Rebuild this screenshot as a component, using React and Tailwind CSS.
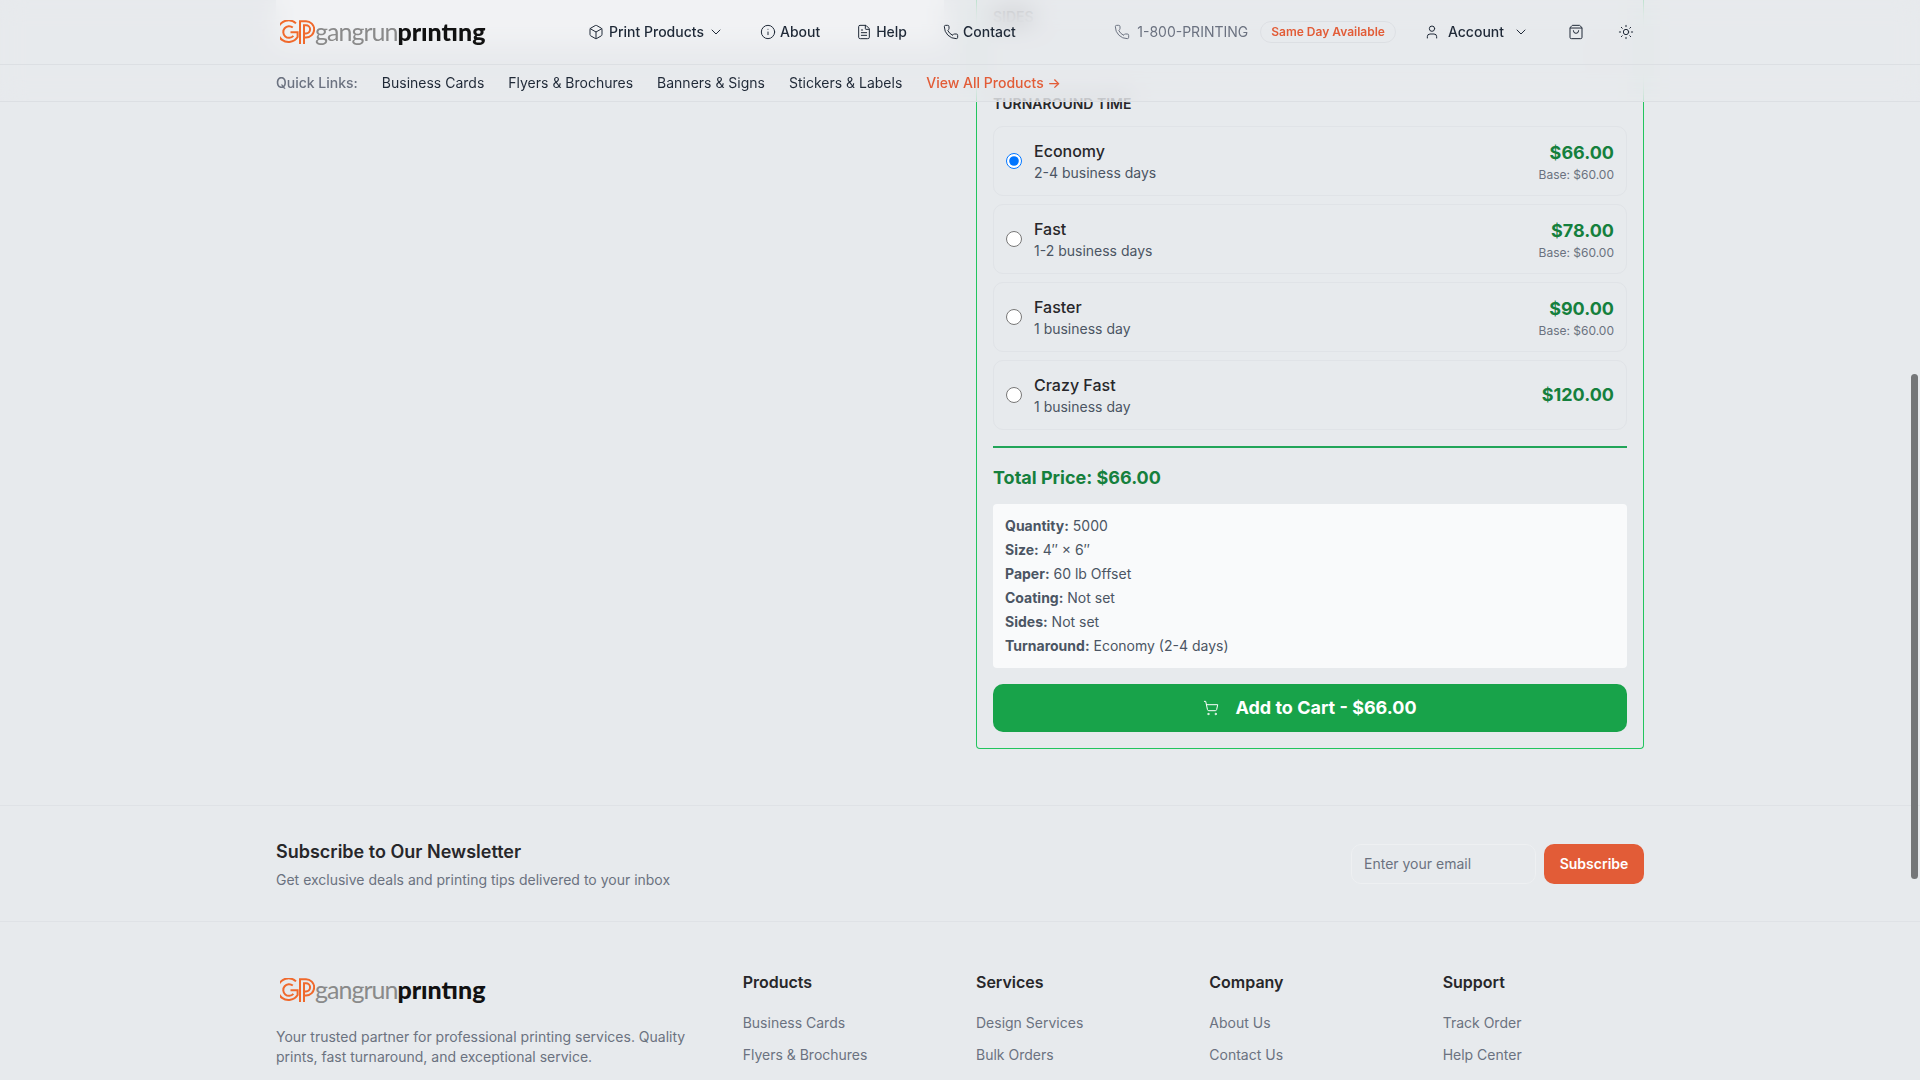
import { Box, Info, FileText, Phone, ChevronDown, User, ShoppingBag, Sun, ShoppingCart } from "lucide-react";

const quickLinks = ["Business Cards", "Flyers & Brochures", "Banners & Signs", "Stickers & Labels"];

const turnarounds = [
  { name: "Economy", time: "2-4 business days", price: "$66.00", base: true, checked: true },
  { name: "Fast", time: "1-2 business days", price: "$78.00", base: true },
  { name: "Faster", time: "1 business day", price: "$90.00", base: true },
  { name: "Crazy Fast", time: "1 business day", price: "$120.00" },
];

const summary = [
  ["Quantity:", "5000"],
  ["Size:", "4″ × 6″"],
  ["Paper:", "60 lb Offset"],
  ["Coating:", "Not set"],
  ["Sides:", "Not set"],
  ["Turnaround:", "Economy (2-4 days)"],
];

const footerCols = [
  { title: "Products", links: ["Business Cards", "Flyers & Brochures"] },
  { title: "Services", links: ["Design Services", "Bulk Orders"] },
  { title: "Company", links: ["About Us", "Contact Us"] },
  { title: "Support", links: ["Track Order", "Help Center"] },
];

function Logo() {
  return (
    <div className="flex h-10 items-center pl-[4px] select-none">
      <svg width="35" height="25" viewBox="0 0 35 25" fill="none" stroke="#f0692c" strokeWidth="2" className="shrink-0">
        <path d="M16 3.4 A10.8 10.8 0 1 0 17.6 17 V12.2 H10.5" />
        <path d="M12.8 7.6 A5.8 5.8 0 1 0 13.4 15.9" />
        <path d="M20 24 V1.2 H26 A8 8 0 0 1 26 17.5 H24" />
        <path d="M24 24 V5.2 H26 A4.1 4.1 0 0 1 26 13.4 H24" />
      </svg>
      <span className="pb-[2px] font-['Lato',sans-serif] text-[25px] leading-none font-normal tracking-[-1px] text-[#8a8a8a]">gangrun</span>
      <span className="pb-[2px] font-['Lato',sans-serif] text-[25px] leading-none font-black tracking-[0px] text-[#111111]">prıntıng</span>
    </div>
  );
}

function Header() {
  return (
    <div className="absolute inset-x-0 top-0 z-10 bg-[#e7eaed]/60 backdrop-blur-md">
      <div className="border-b border-[#dcdfe3]">
        <div className="mx-auto flex h-16 max-w-[1400px] items-center px-4 text-sm font-medium text-[#1f2937]">
          <div className="w-[211px]">
            <Logo />
          </div>
          <nav className="ml-[101px] flex items-center">
            <a className="flex items-center"><Box size={16} strokeWidth={1.5} className="mr-[5px]" />Print Products<ChevronDown size={16} strokeWidth={1.5} className="ml-1" /></a>
            <a className="ml-9 flex items-center gap-1"><Info size={16} strokeWidth={1.5} />About</a>
            <a className="ml-9 flex items-center gap-1"><FileText size={16} strokeWidth={1.5} />Help</a>
            <a className="ml-9 flex items-center gap-1"><Phone size={16} strokeWidth={1.5} />Contact</a>
          </nav>
          <div className="ml-auto flex items-center">
            <Phone size={16} strokeWidth={1.5} className="text-[#6b7280]" />
            <span className="ml-[7px] font-normal text-[#6b7280]">1-800-PRINTING</span>
            <span className="ml-3 rounded-full border border-[#dcdfe3] px-[10px] py-[2px] text-xs font-semibold text-[#e25c37]">Same Day Available</span>
            <User size={16} strokeWidth={1.5} className="ml-7" />
            <span className="ml-2">Account</span>
            <ChevronDown size={16} strokeWidth={1.5} className="ml-[9px]" />
            <ShoppingBag size={16} strokeWidth={1.5} className="ml-[39px]" />
            <Sun size={16} strokeWidth={1.5} className="mr-[10px] ml-[34px]" />
          </div>
        </div>
      </div>
      <div className="border-b border-[#dcdfe3]">
        <div className="mx-auto flex h-9 max-w-[1400px] items-center gap-6 px-4 text-sm text-[#1f2937]">
          <span className="font-medium text-[#6b7280]">Quick Links:</span>
          {quickLinks.map((l) => (
            <a key={l}>{l}</a>
          ))}
          <a className="font-medium text-[#e25c37]">View All Products →</a>
        </div>
      </div>
    </div>
  );
}

function OptionRow({ option }) {
  return (
    <label className="flex h-[70px] items-center rounded-[10px] border border-[#e0e3e7] px-3">
      <input type="radio" name="turnaround" defaultChecked={option.checked} className="m-0 size-4 shrink-0 bg-white accent-[#0075ff]" />
      <div className="ml-3 flex-1">
        <div className="text-base leading-6 font-medium text-[#27272a]">{option.name}</div>
        <div className="text-sm leading-5 text-[#4b5563]">{option.time}</div>
      </div>
      <div className="text-right">
        <div className="text-lg leading-7 font-bold text-[#15803d]">{option.price}</div>
        {option.base && <div className="text-xs leading-4 text-[#6b7280]">Base: $60.00</div>}
      </div>
    </label>
  );
}

export default function App() {
  return (
    <div className="relative h-screen overflow-hidden bg-[#e7eaed] font-['Inter',sans-serif]">
      <Header />

      <div className="mx-auto -mt-[54px] grid max-w-[1400px] grid-cols-2 items-start gap-8 px-4">
        <div className="h-[99px] bg-white" />
        <div className="rounded-b-[4px] border-x border-b border-[#22c55e] px-4 pb-4">
          <div className="pt-[61px] text-sm leading-5 font-semibold text-[#27272a] uppercase">Sides</div>
          {/* select that sits behind the blurred header */}
          <div className="mt-2 mb-[19px] flex h-10 items-center justify-end rounded-md border border-[#e0e3e7] pr-3">
            <ChevronDown size={16} className="text-[#6b7280]" />
          </div>
          <div className="mb-3 text-sm leading-5 font-semibold text-[#27272a] uppercase">Turnaround Time</div>
          <div className="space-y-2">
            {turnarounds.map((o) => (
              <OptionRow key={o.name} option={o} />
            ))}
          </div>
          <div className="my-4 h-[2px] bg-[#22a559]" />
          <div className="text-lg leading-7 font-bold text-[#15803d]">Total Price: $66.00</div>
          <div className="mt-3 rounded-[4px] bg-[#f9fafb] px-3 py-[10px] text-sm leading-6 text-[#4b5563]">
            {summary.map(([k, v]) => (
              <div key={k}>
                <strong className="font-bold">{k}</strong> {v}
              </div>
            ))}
          </div>
          <button className="mt-4 flex h-12 w-full items-center justify-center gap-4 rounded-[10px] bg-[#18a34a] text-lg font-bold text-white">
            <ShoppingCart size={16} strokeWidth={1.5} />
            Add to Cart - $66.00
          </button>
        </div>
      </div>

      <div className="mt-14 border-y border-[#dfe2e6]">
        <div className="mx-auto flex h-[115px] max-w-[1400px] items-center justify-between px-4">
          <div>
            <h3 className="text-lg leading-7 font-semibold text-[#27272a]">Subscribe to Our Newsletter</h3>
            <p className="mt-1 text-sm leading-5 text-[#6b7280]">Get exclusive deals and printing tips delivered to your inbox</p>
          </div>
          <div className="flex gap-2">
            <input placeholder="Enter your email" className="h-10 w-[185px] rounded-[10px] border border-[#eef0f2] px-3 text-sm outline-none placeholder:text-[#6b7280]" />
            <button className="h-10 w-[100px] rounded-[10px] bg-[#e25c37] text-sm font-semibold text-white">Subscribe</button>
          </div>
        </div>
      </div>

      <div className="mx-auto grid max-w-[1400px] grid-cols-6 gap-8 px-4 py-12">
        <div className="col-span-2">
          <Logo />
          <p className="mt-[17px] text-sm leading-5 text-[#6b7280]">Your trusted partner for professional printing services. Quality prints, fast turnaround, and exceptional service.</p>
        </div>
        {footerCols.map((c) => (
          <div key={c.title}>
            <h4 className="mb-4 text-base font-semibold text-[#27272a]">{c.title}</h4>
            <ul className="space-y-2">
              {c.links.map((l) => (
                <li key={l}>
                  <a className="text-sm text-[#6b7280]">{l}</a>
                </li>
              ))}
            </ul>
          </div>
        ))}
      </div>

      {/* overlay scrollbar thumb */}
      <div className="absolute top-[374px] right-[2px] z-20 h-[505px] w-[7px] rounded-full bg-[#757779]" />
    </div>
  );
}
